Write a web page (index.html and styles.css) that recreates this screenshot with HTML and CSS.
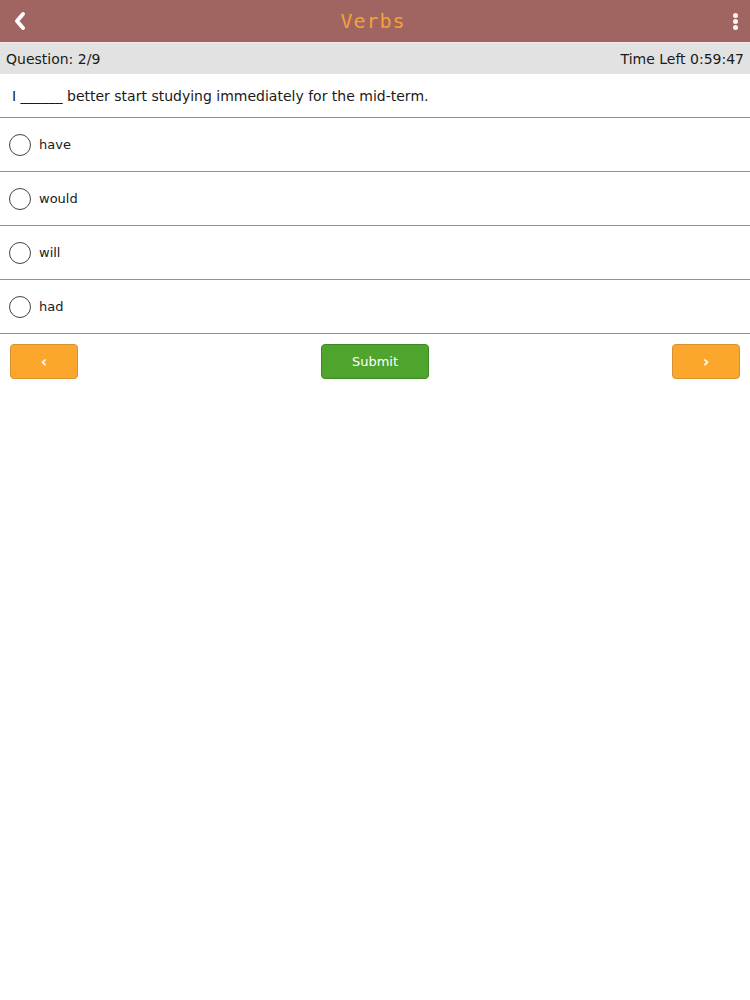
FILE: index.html
```html
<!doctype html>
<html lang="en">
  <head>
    <meta charset="utf-8">
    <meta name="viewport" content="width=device-width, initial-scale=1.0">
    <title>Verbs</title>
    <link rel="stylesheet" href="styles.css">
  </head>
  <body>
    <header class="topbar">
      <button class="icon-btn back" aria-label="Back">
        <svg viewBox="0 0 16 24" width="16" height="24">
          <path d="M11 5 L5 12 L11 19" fill="none" stroke="#fff" stroke-width="4" stroke-linecap="round" stroke-linejoin="round"></path>
        </svg>
      </button>
      <h1 class="title">Verbs</h1>
      <button class="icon-btn menu" aria-label="Menu">
        <span class="dot"></span><span class="dot"></span><span class="dot"></span>
      </button>
    </header>

    <div class="status">
      <span>Question: 2/9</span>
      <span>Time Left 0:59:47</span>
    </div>

    <p class="question">I ______ better start studying immediately for the mid-term.</p>

    <ul class="options">
      <li class="option"><span class="radio"></span>have</li>
      <li class="option"><span class="radio"></span>would</li>
      <li class="option"><span class="radio"></span>will</li>
      <li class="option"><span class="radio"></span>had</li>
    </ul>

    <div class="actions">
      <button class="btn nav">&lsaquo;</button>
      <button class="btn submit">Submit</button>
      <button class="btn nav">&rsaquo;</button>
    </div>
  </body>
</html>
```

FILE: styles.css
```css
* {
  margin: 0;
  padding: 0;
  box-sizing: border-box;
}

body {
  background: #fff;
  font-family: 'DejaVu Sans', Verdana, sans-serif;
  color: #1a1a1a;
  width: 750px;
}

.topbar {
  height: 42px;
  background: #a06461;
  display: flex;
  align-items: center;
  justify-content: space-between;
  padding: 0 12px 0 8px;
}

.icon-btn {
  background: none;
  border: none;
  width: 24px;
  height: 30px;
  display: flex;
  align-items: center;
  justify-content: center;
}

.menu {
  flex-direction: column;
  gap: 1px;
  align-items: flex-end;
}

.dot {
  width: 5px;
  height: 5px;
  border-radius: 50%;
  background: #fff4ee;
}

.title {
  font-family: 'DejaVu Sans Mono', monospace;
  font-weight: normal;
  font-size: 20px;
  letter-spacing: 1px;
  color: #f2a23a;
}

.status {
  height: 32px;
  background: #e2e2e2;
  border-top: 1px solid #ececec;
  display: flex;
  align-items: center;
  justify-content: space-between;
  padding: 0 6px;
  font-size: 14px;
}

.question {
  height: 44px;
  line-height: 44px;
  padding: 0 12px;
  font-size: 14px;
  border-bottom: 1px solid #72b04e;
}

.options {
  list-style: none;
}

.option {
  height: 54px;
  display: flex;
  align-items: center;
  gap: 8px;
  padding: 0 9px;
  font-size: 13px;
  border-bottom: 1px solid #72b04e;
}

.radio {
  width: 22px;
  height: 22px;
  border: 1.5px solid #444;
  border-radius: 50%;
}

.actions {
  display: flex;
  justify-content: space-between;
  align-items: center;
  padding: 10px 10px;
}

.btn {
  height: 35px;
  border-radius: 4px;
  color: #fff;
  font-family: 'DejaVu Sans', sans-serif;
  font-size: 13px;
}

.nav {
  width: 68px;
  background: #fba72d;
  border: 1px solid #d99030;
  font-size: 15px;
  font-weight: bold;
}

.submit {
  width: 108px;
  background: #4ea42c;
  border: 1px solid #3d8a22;
}
```
